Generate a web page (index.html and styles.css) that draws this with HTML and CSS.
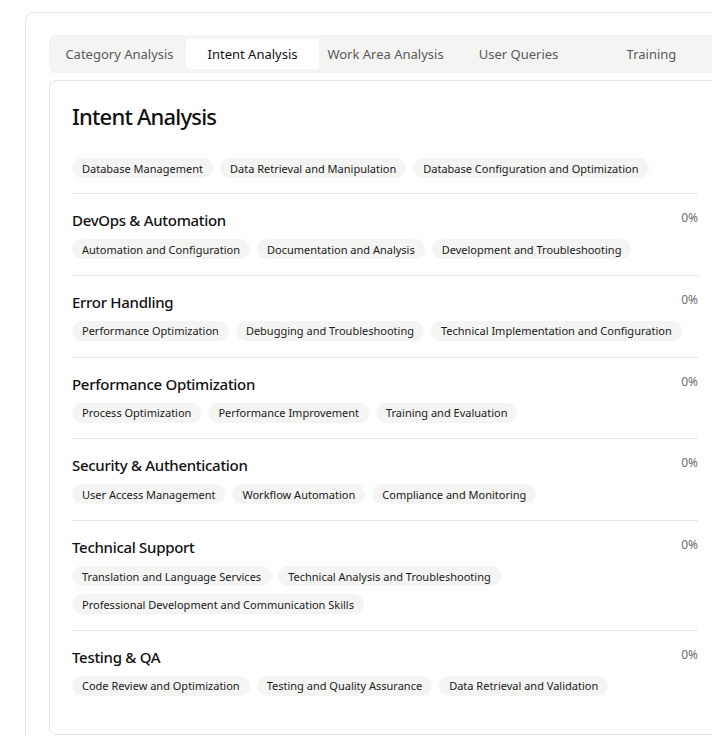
FILE: index.html
```html
<!DOCTYPE html>
<html>
<head>
<meta charset="utf-8">
<link rel="stylesheet" href="styles.css">
</head>
<body>
<div class="page">
  <div class="outer">
    <div class="tabs">
      <div class="tab">Category Analysis</div>
      <div class="tab active">Intent Analysis</div>
      <div class="tab">Work Area Analysis</div>
      <div class="tab">User Queries</div>
      <div class="tab">Training</div>
    </div>
    <div class="card">
      <h1 class="title">Intent Analysis</h1>
      <div class="section first">
        <div class="chips">
          <span class="chip">Database Management</span>
          <span class="chip">Data Retrieval and Manipulation</span>
          <span class="chip">Database Configuration and Optimization</span>
        </div>
      </div>
      <div class="section">
        <div class="head"><h2>DevOps &amp; Automation</h2><span class="pct">0%</span></div>
        <div class="chips">
          <span class="chip">Automation and Configuration</span>
          <span class="chip">Documentation and Analysis</span>
          <span class="chip">Development and Troubleshooting</span>
        </div>
      </div>
      <div class="section">
        <div class="head"><h2>Error Handling</h2><span class="pct">0%</span></div>
        <div class="chips">
          <span class="chip">Performance Optimization</span>
          <span class="chip">Debugging and Troubleshooting</span>
          <span class="chip">Technical Implementation and Configuration</span>
        </div>
      </div>
      <div class="section">
        <div class="head"><h2>Performance Optimization</h2><span class="pct">0%</span></div>
        <div class="chips">
          <span class="chip">Process Optimization</span>
          <span class="chip">Performance Improvement</span>
          <span class="chip">Training and Evaluation</span>
        </div>
      </div>
      <div class="section">
        <div class="head"><h2>Security &amp; Authentication</h2><span class="pct">0%</span></div>
        <div class="chips">
          <span class="chip">User Access Management</span>
          <span class="chip">Workflow Automation</span>
          <span class="chip">Compliance and Monitoring</span>
        </div>
      </div>
      <div class="section">
        <div class="head"><h2>Technical Support</h2><span class="pct">0%</span></div>
        <div class="chips">
          <span class="chip">Translation and Language Services</span>
          <span class="chip">Technical Analysis and Troubleshooting</span>
          <span class="chip">Professional Development and Communication Skills</span>
        </div>
      </div>
      <div class="section">
        <div class="head"><h2>Testing &amp; QA</h2><span class="pct">0%</span></div>
        <div class="chips">
          <span class="chip">Code Review and Optimization</span>
          <span class="chip">Testing and Quality Assurance</span>
          <span class="chip">Data Retrieval and Validation</span>
        </div>
      </div>
    </div>
  </div>
</div>
</body>
</html>
```
FILE: styles.css
```css
* { box-sizing: border-box; }
html, body { margin: 0; padding: 0; background: #fff; overflow: hidden; }
body {
  font-family: "Noto Sans", "Open Sans", sans-serif;
  color: #111;
}
.page {
  padding: 12px 0 0 25px;
  width: 760px;
}
.outer {
  width: 722px;
  border: 1px solid #e4e4e4;
  border-radius: 9px;
  padding: 22px 23px 24px 23px;
}
.tabs {
  display: grid;
  grid-template-columns: repeat(5, 133px);
  width: 673px;
  padding: 4px;
  background: #f4f4f3;
  border-radius: 6px;
  height: 38px;
}
.tab {
  display: flex;
  align-items: center;
  justify-content: center;
  font-size: 13px;
  color: #5a5a5a;
  border-radius: 4px;
  height: 30px;
}
.tab.active {
  background: #fff;
  color: #111;
}
.card {
  margin-top: 7px;
  width: 673px;
  border: 1px solid #e4e4e4;
  border-radius: 8px;
  padding: 21px 23px 22px 22px;
}
.title {
  margin: 0;
  font-size: 22px;
  font-weight: 500;
  line-height: 28px;
  letter-spacing: -0.8px;
}
.section {
  padding: 16px 0 15.8px;
  border-top: 1px solid #e6e6e6;
}
.section.first {
  border-top: none;
  padding-top: 28px;
  padding-bottom: 15px;
}
.head {
  display: flex;
  justify-content: space-between;
  align-items: flex-start;
  margin-bottom: 8px;
}
.head h2 {
  margin: 0;
  font-size: 15px;
  font-weight: 500;
  line-height: 21px;
  letter-spacing: -0.3px;
}
.pct {
  font-size: 12px;
  color: #6e6e6e;
  line-height: 16px;
}
.chips {
  display: flex;
  flex-wrap: wrap;
  gap: 8px 7px;
}
.chip {
  display: inline-flex;
  align-items: center;
  height: 20px;
  padding: 0 10px;
  background: #f4f4f3;
  border-radius: 10px;
  font-size: 11px;
  color: #1a1a1a;
}
```
